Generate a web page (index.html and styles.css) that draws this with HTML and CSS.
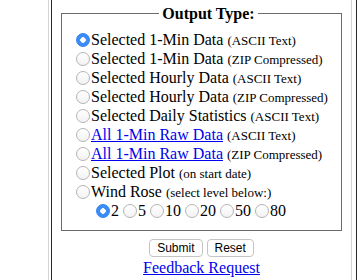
FILE: index.html
```html
<!DOCTYPE html>
<html lang="en">
<head>
    <meta charset="UTF-8">
    <title>Output Type</title>
    <link rel="stylesheet" href="styles.css">
</head>
<body>
    <div class="frame">
        <div class="cell">
            <form>
                <fieldset class="output">
                    <legend>Output Type:</legend>
                    <div class="opt"><input type="radio" name="type" value="1min" checked>Selected 1-Min Data <small>(ASCII Text)</small></div>
                    <div class="opt"><input type="radio" name="type" value="1minzip">Selected 1-Min Data <small>(ZIP Compressed)</small></div>
                    <div class="opt"><input type="radio" name="type" value="hourly">Selected Hourly Data <small>(ASCII Text)</small></div>
                    <div class="opt"><input type="radio" name="type" value="hourlyzip">Selected Hourly Data <small>(ZIP Compressed)</small></div>
                    <div class="opt"><input type="radio" name="type" value="daily">Selected Daily Statistics <small>(ASCII Text)</small></div>
                    <div class="opt"><input type="radio" name="type" value="raw"><a href="#">All 1-Min Raw Data</a> <small>(ASCII Text)</small></div>
                    <div class="opt"><input type="radio" name="type" value="rawzip"><a href="#">All 1-Min Raw Data</a> <small>(ZIP Compressed)</small></div>
                    <div class="opt"><input type="radio" name="type" value="plot">Selected Plot <small>(on start date)</small></div>
                    <div class="opt"><input type="radio" name="type" value="rose">Wind Rose <small>(select level below:)</small></div>
                    <div class="opt levels">
                        <input type="radio" name="level" value="2" checked>2
                        <input type="radio" name="level" value="5">5
                        <input type="radio" name="level" value="10">10
                        <input type="radio" name="level" value="20">20
                        <input type="radio" name="level" value="50">50
                        <input type="radio" name="level" value="80">80
                    </div>
                </fieldset>
                <div class="buttons">
                    <button type="submit">Submit</button> <button type="reset">Reset</button>
                </div>
                <a class="feedback" href="#">Feedback Request</a>
            </form>
        </div>
    </div>
</body>
</html>
```

FILE: styles.css
```css
body {
    margin: 0;
    font-family: "Liberation Serif", "Times New Roman", serif;
    font-size: 16px;
    color: #000;
    background: #fff;
}
a {
    color: #0000ee;
}
.frame {
    margin-left: 48px;
    width: 304px;
    height: 290px;
    border-left: 1px solid #d4d4d4;
    border-right: 1px solid #2a2a2a;
    padding: 0 1px 0 2px;
    box-sizing: content-box;
}
.frame .cell {
    width: 299px;
    height: 100%;
    border-left: 1px solid #2a2a2a;
    border-right: 1px solid #d4d4d4;
    padding-top: 4px;
    box-sizing: content-box;
    text-align: center;
}
.output {
    margin: 0 9px;
    padding: 7px 0 0 14px;
    height: 227px;
    box-sizing: border-box;
    border: 1px solid #6b6b6b;
    text-align: left;
}
.output legend {
    margin: 0 auto;
    padding: 0 3px;
    font-weight: bold;
    line-height: 19px;
}
.opt {
    height: 19px;
    line-height: 19px;
    white-space: nowrap;
}
.opt small {
    font-size: 13px;
    line-height: 1;
}
.levels {
    padding-left: 20px;
}
input[type="radio"] {
    -webkit-appearance: none;
    appearance: none;
    width: 14px;
    height: 14px;
    margin: 0 1px 0 0;
    border: 1px solid #b4b4b4;
    border-radius: 50%;
    background: linear-gradient(#ffffff, #f2f2f2);
    vertical-align: -2px;
    box-sizing: border-box;
}
input[type="radio"]:checked {
    border-color: #3183f2;
    background: radial-gradient(circle, #fff 0 2.5px, #3b8cf6 3px);
}
.buttons {
    margin-top: 8px;
    height: 18px;
    line-height: 18px;
}
.buttons button {
    height: 18px;
    padding: 0 7px;
    font-family: "Liberation Sans", Arial, sans-serif;
    font-size: 12px;
    background: #fff;
    border: 1px solid #c4c4c4;
    border-radius: 4px;
    color: #000;
    vertical-align: top;
}
.feedback {
    display: inline-block;
    margin-top: 2px;
    line-height: 18px;
}
```
